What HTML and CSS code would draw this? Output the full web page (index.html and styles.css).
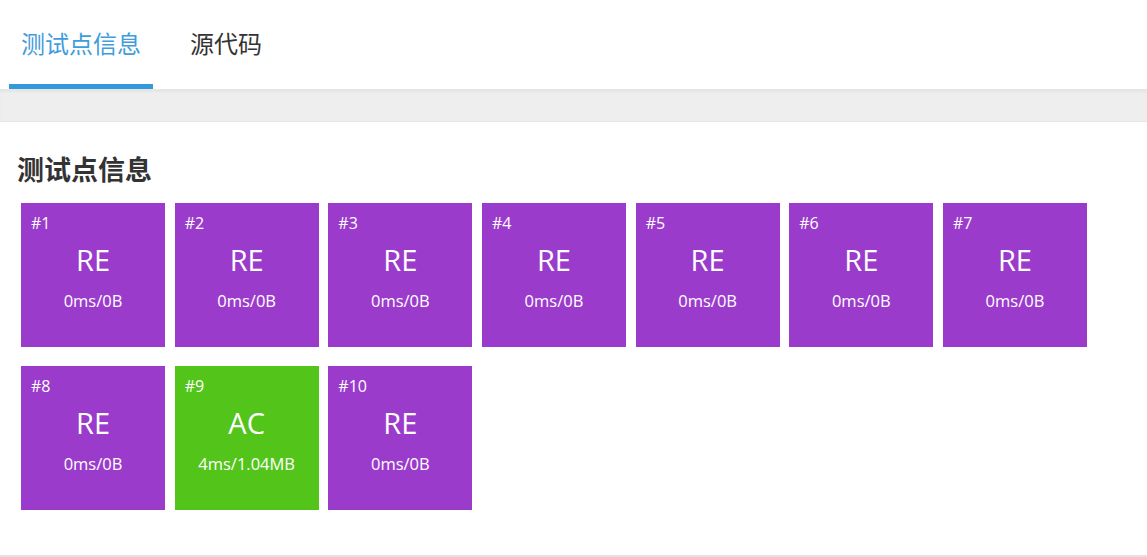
FILE: index.html
```html
<!DOCTYPE html>
<html lang="zh">
<head>
<meta charset="utf-8">
<link rel="stylesheet" href="styles.css">
</head>
<body>
<div class="tabs">
  <div class="tab active">测试点信息</div>
  <div class="tab">源代码</div>
</div>
<div class="band"></div>
<div class="panel">
  <h2 class="title">测试点信息</h2>
  <div class="cases">
    <div class="case re"><div class="num">#1</div><div class="verdict">RE</div><div class="stat">0ms/0B</div></div>
    <div class="case re"><div class="num">#2</div><div class="verdict">RE</div><div class="stat">0ms/0B</div></div>
    <div class="case re"><div class="num">#3</div><div class="verdict">RE</div><div class="stat">0ms/0B</div></div>
    <div class="case re"><div class="num">#4</div><div class="verdict">RE</div><div class="stat">0ms/0B</div></div>
    <div class="case re"><div class="num">#5</div><div class="verdict">RE</div><div class="stat">0ms/0B</div></div>
    <div class="case re"><div class="num">#6</div><div class="verdict">RE</div><div class="stat">0ms/0B</div></div>
    <div class="case re"><div class="num">#7</div><div class="verdict">RE</div><div class="stat">0ms/0B</div></div>
    <div class="case re"><div class="num">#8</div><div class="verdict">RE</div><div class="stat">0ms/0B</div></div>
    <div class="case ac"><div class="num">#9</div><div class="verdict">AC</div><div class="stat">4ms/1.04MB</div></div>
    <div class="case re"><div class="num">#10</div><div class="verdict">RE</div><div class="stat">0ms/0B</div></div>
  </div>
</div>
</body>
</html>
```
FILE: styles.css
```css
html, body {
  margin: 0;
  padding: 0;
  background: #fff;
  font-family: "Open Sans", "Noto Sans CJK SC", sans-serif;
}
.tabs {
  display: flex;
  height: 89px;
  padding-left: 9px;
  gap: 25px;
  border-bottom: 1px solid #e6e6e6;
  box-sizing: content-box;
}
.tab {
  display: flex;
  align-items: center;
  padding: 0 12px;
  font-family: "Noto Sans CJK SC", sans-serif;
  font-size: 24px;
  color: #333;
  border-bottom: 5px solid transparent;
}
.tab.active {
  color: #3f9ddc;
  border-bottom-color: #3498db;
}
.band {
  height: 31px;
  background: #eeeeee;
  box-shadow: inset 0 2px 2px rgba(0,0,0,0.04);
  border-bottom: 1px solid #e4e4e4;
}
.panel {
  padding: 30px 0 45px 0;
  border-bottom: 2px solid #e2e2e2;
}
.title {
  margin: 0 0 17px 17px;
  font-family: "Noto Sans CJK SC", sans-serif;
  font-size: 27px;
  font-weight: 700;
  color: #333;
  line-height: 34px;
}
.cases {
  display: flex;
  flex-wrap: wrap;
  gap: 19px 9.67px;
  padding-left: 21px;
  width: 1080px;
}
.case {
  width: 144px;
  height: 144px;
  box-sizing: border-box;
  padding: 10px 10px 0;
  color: #fff;
  display: flex;
  flex-direction: column;
}
.re { background: #9b3bcc; }
.ac { background: #52c41a; }
.num {
  font-size: 16px;
  line-height: 21px;
}
.verdict {
  text-align: center;
  font-size: 29px;
  line-height: 34px;
  margin-top: 9px;
}
.stat {
  text-align: center;
  font-size: 16.5px;
  line-height: 22px;
  margin-top: 13px;
}
```
